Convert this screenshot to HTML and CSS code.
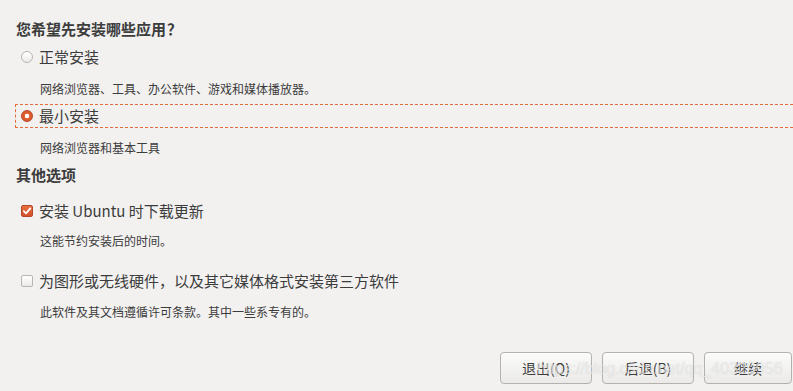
FILE: index.html
```html
<!DOCTYPE html>
<html lang="zh-CN">
<head>
    <meta charset="UTF-8">
    <meta name="viewport" content="width=device-width, initial-scale=1.0">
    <title>安装类型</title>
    <link rel="stylesheet" href="styles.css">
</head>
<body>
    <div class="page">
        <h2 class="section-title">您希望先安装哪些应用<span class="fw">？</span></h2>

        <label class="option">
            <span class="radio"></span>
            <span class="option-label">正常安装</span>
        </label>
        <div class="option-desc">网络浏览器、工具、办公软件、游戏和媒体播放器。</div>

        <label class="option option-focused">
            <span class="radio radio-checked"></span>
            <span class="option-label">最小安装</span>
        </label>
        <div class="option-desc">网络浏览器和基本工具</div>

        <h2 class="section-title section-other">其他选项</h2>

        <label class="option option-check">
            <span class="check check-on">
                <svg width="10" height="10" viewBox="0 0 10 10"><path d="M1.8 5.2 L4 7.4 L8.3 2.4" fill="none" stroke="#fff" stroke-width="1.8" stroke-linecap="round" stroke-linejoin="round"/></svg>
            </span>
            <span class="option-label">安装 Ubuntu 时下载更新</span>
        </label>
        <div class="option-desc">这能节约安装后的时间。</div>

        <label class="option option-check option-third">
            <span class="check"></span>
            <span class="option-label">为图形或无线硬件，以及其它媒体格式安装第三方软件</span>
        </label>
        <div class="option-desc">此软件及其文档遵循许可条款。其中一些系专有的。</div>

        <div class="button-bar">
            <button class="btn">退出(Q)</button>
            <button class="btn">后退(B)</button>
            <button class="btn btn-last">继续</button>
        </div>

        <div class="watermark">https://blog.csdn.net/qq_40329956</div>
    </div>
</body>
</html>
```

FILE: styles.css
```css
body {
    margin: 0;
    padding: 0;
    background-color: #f2f1f0;
    font-family: "Noto Sans CJK SC", "Noto Sans", sans-serif;
    color: #3c3c3c;
    overflow: hidden;
}

.page {
    position: relative;
    width: 793px;
    height: 391px;
    padding: 19px 0 0 15px;
    box-sizing: border-box;
    overflow: hidden;
}

.section-title {
    margin: 0;
    padding-left: 1px;
    font-size: 15px;
    line-height: 20px;
    font-weight: bold;
    color: #3c3c3c;
}

/* keep the question mark full width */
.fw {
    display: inline-block;
    width: 15px;
    text-align: center;
    margin-left: 1px;
}

.section-other {
    margin-top: 8px;
}

.option {
    display: flex;
    align-items: center;
    gap: 6px;
    height: 24px;
    box-sizing: border-box;
    border: 1px solid transparent;
    padding-left: 5px;
    margin-top: 6px;
}

.option-focused {
    border: 1px dashed #e26d3a;
    margin-right: -30px;
}

.option-check {
    margin-top: 14px;
}

.option-third {
    margin-top: 19px;
}

.option-label {
    font-size: 15px;
    line-height: 20px;
    color: #3c3c3c;
    white-space: nowrap;
}

.option-desc {
    margin-top: 11px;
    padding-left: 25px;
    font-size: 12px;
    line-height: 18px;
    color: #3c3c3c;
    white-space: nowrap;
}

.option-check + .option-desc {
    margin-top: 9px;
}

.option-third + .option-desc {
    margin-top: 10px;
}

.radio {
    width: 12px;
    height: 12px;
    box-sizing: border-box;
    border-radius: 50%;
    border: 1px solid #b8b6b2;
    background: linear-gradient(#ffffff, #eceae7);
    flex-shrink: 0;
}

.radio-checked {
    border: 1px solid #b7472a;
    background: radial-gradient(circle, #ffffff 0, #ffffff 2px, #e06030 2.6px, #d9552b 100%);
}

.check {
    width: 12px;
    height: 12px;
    box-sizing: border-box;
    border-radius: 2px;
    border: 1px solid #b8b6b2;
    background: linear-gradient(#ffffff, #eceae7);
    flex-shrink: 0;
    display: flex;
    align-items: center;
    justify-content: center;
}

.check-on {
    border: 1px solid #b7472a;
    background: linear-gradient(#e8703f, #d2512a);
}

.check svg {
    display: block;
}

.button-bar {
    display: flex;
    justify-content: flex-end;
    gap: 10px;
    margin-top: 31px;
    padding-right: 1px;
}

.btn {
    width: 92px;
    height: 32px;
    box-sizing: border-box;
    border: 1px solid #b4b2ae;
    border-radius: 4px;
    background: linear-gradient(#fbfbfa, #ebeae8);
    box-shadow: 0 1px 0 rgba(255, 255, 255, 0.7) inset;
    font-family: "Noto Sans CJK SC", "Noto Sans", sans-serif;
    font-size: 14px;
    color: #3c3c3c;
    padding: 0 0 1px 0;
    cursor: pointer;
}

.btn-last {
    width: 88px;
}

.watermark {
    position: absolute;
    left: 537px;
    top: 360px;
    font-family: "Liberation Sans", Arial, sans-serif;
    font-size: 16px;
    color: rgba(255, 255, 255, 0.6);
    text-shadow: 0 0 1px rgba(120, 120, 120, 0.35);
    white-space: nowrap;
    pointer-events: none;
}
```
